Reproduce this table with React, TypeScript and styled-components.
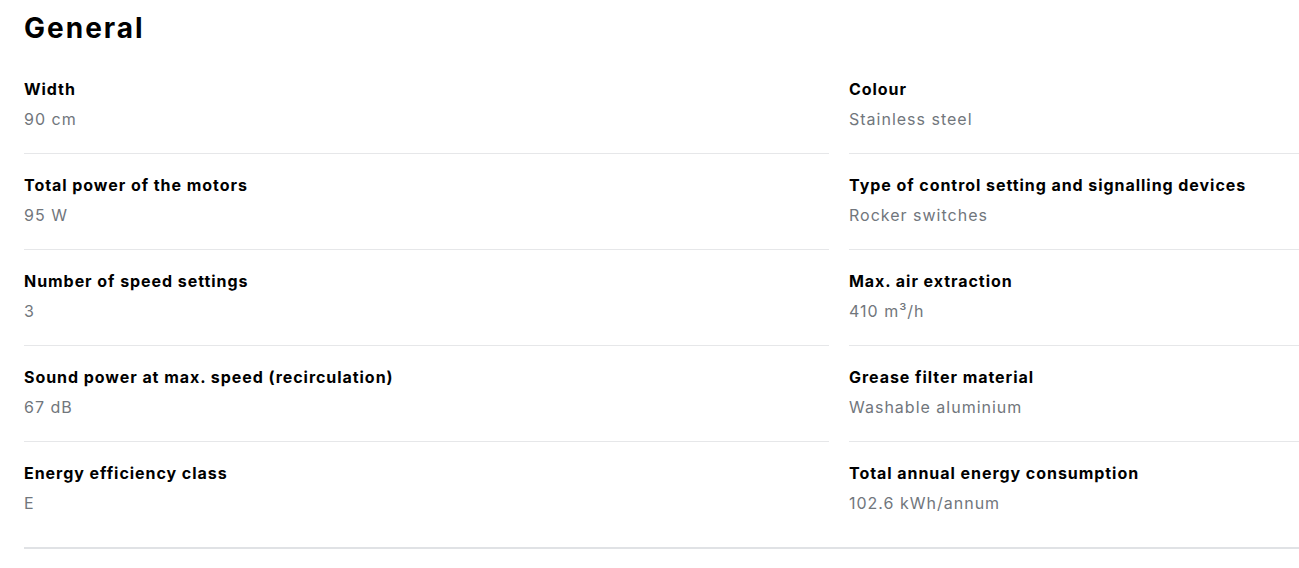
import React from "react";
import styled, { createGlobalStyle } from "styled-components";

const Global = createGlobalStyle`
  html, body { margin: 0; padding: 0; background: #ffffff; }
  body { font-family: Inter, "Noto Sans", sans-serif; color: #000; overflow: hidden; }
`;

const Section = styled.section`
  padding: 8px 0 0 24px;
  width: 1275px;
`;

const Heading = styled.h2`
  margin: 0 0 10px 0;
  font-size: 28px;
  line-height: 40px;
  font-weight: 700;
  letter-spacing: 2px;
`;

const Grid = styled.dl`
  margin: 0;
  display: grid;
  grid-template-columns: 805px 450px;
  column-gap: 20px;
  border-bottom: 2px solid #e0e2e5;
  padding-bottom: 10px;
`;

const Cell = styled.div<{ $last?: boolean }>`
  padding: 19px 0 22px 0;
  border-bottom: ${(p) => (p.$last ? "none" : "1px solid #e6e7e9")};
`;

const Label = styled.dt`
  font-size: 16px;
  line-height: 24px;
  font-weight: 700;
  letter-spacing: 0.95px;
  color: #000;
`;

const Value = styled.dd`
  margin: 6px 0 0 0;
  font-size: 16px;
  line-height: 24px;
  font-weight: 400;
  letter-spacing: 1px;
  color: #71767c;
`;

const items: [string, string][] = [
  ["Width", "90 cm"],
  ["Colour", "Stainless steel"],
  ["Total power of the motors", "95 W"],
  ["Type of control setting and signalling devices", "Rocker switches"],
  ["Number of speed settings", "3"],
  ["Max. air extraction", "410 m³/h"],
  ["Sound power at max. speed (recirculation)", "67 dB"],
  ["Grease filter material", "Washable aluminium"],
  ["Energy efficiency class", "E"],
  ["Total annual energy consumption", "102.6 kWh/annum"],
];

export default function App() {
  return (
    <>
      <Global />
      <Section>
        <Heading>General</Heading>
        <Grid>
          {items.map(([l, v], i) => (
            <Cell key={l} $last={i >= items.length - 2}>
              <Label>{l}</Label>
              <Value>{v}</Value>
            </Cell>
          ))}
        </Grid>
      </Section>
    </>
  );
}
